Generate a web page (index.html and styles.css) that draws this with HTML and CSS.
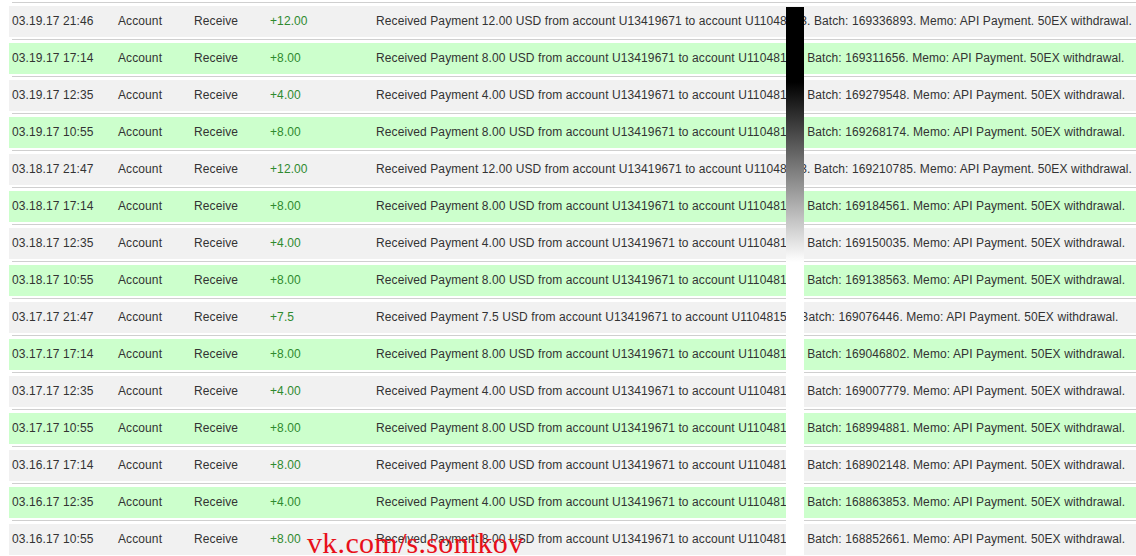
FILE: index.html
```html
<!DOCTYPE html>
<html lang="en">
<head>
  <meta charset="UTF-8">
  <title>History</title>
  <link rel="stylesheet" href="styles.css">
</head>
<body>
  <div class="history">
    <div class="row"><div class="cells"><span class="c-date">03.19.17 21:46</span><span class="c-type">Account</span><span class="c-op">Receive</span><span class="c-amt">+12.00</span><span class="c-desc">Received Payment 12.00 USD from account U13419671 to account U11048153. Batch: 169336893. Memo: API Payment. 50EX withdrawal.</span></div></div>
    <div class="row green"><div class="cells"><span class="c-date">03.19.17 17:14</span><span class="c-type">Account</span><span class="c-op">Receive</span><span class="c-amt">+8.00</span><span class="c-desc">Received Payment 8.00 USD from account U13419671 to account U11048153. Batch: 169311656. Memo: API Payment. 50EX withdrawal.</span></div></div>
    <div class="row"><div class="cells"><span class="c-date">03.19.17 12:35</span><span class="c-type">Account</span><span class="c-op">Receive</span><span class="c-amt">+4.00</span><span class="c-desc">Received Payment 4.00 USD from account U13419671 to account U11048153. Batch: 169279548. Memo: API Payment. 50EX withdrawal.</span></div></div>
    <div class="row green"><div class="cells"><span class="c-date">03.19.17 10:55</span><span class="c-type">Account</span><span class="c-op">Receive</span><span class="c-amt">+8.00</span><span class="c-desc">Received Payment 8.00 USD from account U13419671 to account U11048153. Batch: 169268174. Memo: API Payment. 50EX withdrawal.</span></div></div>
    <div class="row"><div class="cells"><span class="c-date">03.18.17 21:47</span><span class="c-type">Account</span><span class="c-op">Receive</span><span class="c-amt">+12.00</span><span class="c-desc">Received Payment 12.00 USD from account U13419671 to account U11048153. Batch: 169210785. Memo: API Payment. 50EX withdrawal.</span></div></div>
    <div class="row green"><div class="cells"><span class="c-date">03.18.17 17:14</span><span class="c-type">Account</span><span class="c-op">Receive</span><span class="c-amt">+8.00</span><span class="c-desc">Received Payment 8.00 USD from account U13419671 to account U11048153. Batch: 169184561. Memo: API Payment. 50EX withdrawal.</span></div></div>
    <div class="row"><div class="cells"><span class="c-date">03.18.17 12:35</span><span class="c-type">Account</span><span class="c-op">Receive</span><span class="c-amt">+4.00</span><span class="c-desc">Received Payment 4.00 USD from account U13419671 to account U11048153. Batch: 169150035. Memo: API Payment. 50EX withdrawal.</span></div></div>
    <div class="row green"><div class="cells"><span class="c-date">03.18.17 10:55</span><span class="c-type">Account</span><span class="c-op">Receive</span><span class="c-amt">+8.00</span><span class="c-desc">Received Payment 8.00 USD from account U13419671 to account U11048153. Batch: 169138563. Memo: API Payment. 50EX withdrawal.</span></div></div>
    <div class="row"><div class="cells"><span class="c-date">03.17.17 21:47</span><span class="c-type">Account</span><span class="c-op">Receive</span><span class="c-amt">+7.5</span><span class="c-desc">Received Payment 7.5 USD from account U13419671 to account U11048153. Batch: 169076446. Memo: API Payment. 50EX withdrawal.</span></div></div>
    <div class="row green"><div class="cells"><span class="c-date">03.17.17 17:14</span><span class="c-type">Account</span><span class="c-op">Receive</span><span class="c-amt">+8.00</span><span class="c-desc">Received Payment 8.00 USD from account U13419671 to account U11048153. Batch: 169046802. Memo: API Payment. 50EX withdrawal.</span></div></div>
    <div class="row"><div class="cells"><span class="c-date">03.17.17 12:35</span><span class="c-type">Account</span><span class="c-op">Receive</span><span class="c-amt">+4.00</span><span class="c-desc">Received Payment 4.00 USD from account U13419671 to account U11048153. Batch: 169007779. Memo: API Payment. 50EX withdrawal.</span></div></div>
    <div class="row green"><div class="cells"><span class="c-date">03.17.17 10:55</span><span class="c-type">Account</span><span class="c-op">Receive</span><span class="c-amt">+8.00</span><span class="c-desc">Received Payment 8.00 USD from account U13419671 to account U11048153. Batch: 168994881. Memo: API Payment. 50EX withdrawal.</span></div></div>
    <div class="row"><div class="cells"><span class="c-date">03.16.17 17:14</span><span class="c-type">Account</span><span class="c-op">Receive</span><span class="c-amt">+8.00</span><span class="c-desc">Received Payment 8.00 USD from account U13419671 to account U11048153. Batch: 168902148. Memo: API Payment. 50EX withdrawal.</span></div></div>
    <div class="row green"><div class="cells"><span class="c-date">03.16.17 12:35</span><span class="c-type">Account</span><span class="c-op">Receive</span><span class="c-amt">+4.00</span><span class="c-desc">Received Payment 4.00 USD from account U13419671 to account U11048153. Batch: 168863853. Memo: API Payment. 50EX withdrawal.</span></div></div>
    <div class="row"><div class="cells"><span class="c-date">03.16.17 10:55</span><span class="c-type">Account</span><span class="c-op">Receive</span><span class="c-amt">+8.00</span><span class="c-desc">Received Payment 8.00 USD from account U13419671 to account U11048153. Batch: 168852661. Memo: API Payment. 50EX withdrawal.</span></div></div>
  </div>

  <!-- overlays: censor bar and watermark -->
  <div class="censor"></div>
  <div class="watermark">vk.com/s.sonikov</div>
</body>
</html>
```

FILE: styles.css
```css
html {
  overflow: hidden;
}

body {
  font-family: 'Liberation Sans', Arial, sans-serif;
  font-size: 12px;
  letter-spacing: 0.1px;
  color: #333;
  background: #fff;
  margin: 0;
  padding: 2px 0 0 0;
  position: relative;
  height: 556px;
  overflow: hidden;
}

.history {
  margin-left: 9px;
}

.row {
  border-top: 1px solid #cfcfcf;
  margin-left: 3px;
  padding-top: 3px;
  margin-bottom: 2px;
}

.cells {
  display: grid;
  grid-template-columns: 106px 76px 76px 106px 1fr;
  align-items: center;
  height: 31px;
  padding-bottom: 1px;
  box-sizing: border-box;
  margin-left: -3px;
  background: #f1f1f1;
  white-space: nowrap;
}

.green .cells {
  background: #ccffcc;
}

.cells span {
  padding-left: 3px;
}

.c-amt {
  color: #2f8a2f;
}

.censor {
  position: absolute;
  left: 786px;
  top: 7px;
  width: 18px;
  height: 560px;
  background: linear-gradient(#000 0, #000 75px, #fff 255px, #fff 100%);
}

.watermark {
  position: absolute;
  left: 307px;
  top: 528px;
  font-family: 'Liberation Serif', 'Times New Roman', serif;
  font-size: 30px;
  line-height: 30px;
  letter-spacing: 0.3px;
  color: #e8101a;
}
```
